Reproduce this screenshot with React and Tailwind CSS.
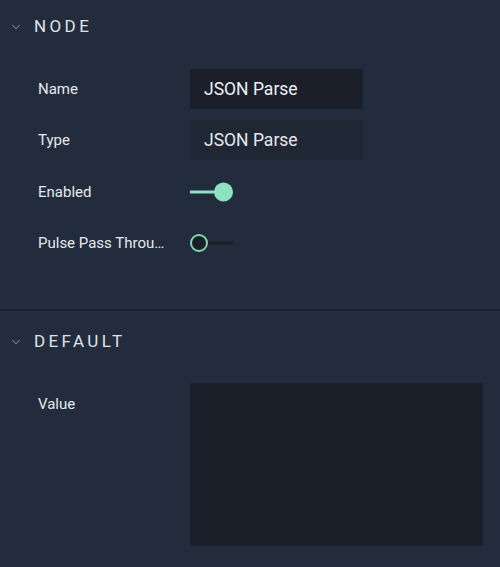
import { ChevronDown } from "lucide-react";

function SectionHeader({ title }) {
  return (
    <div className="flex h-[54px] items-center pl-[9px]">
      <ChevronDown className="h-[14px] w-[14px] text-[#7d8594]" strokeWidth={1.75} />
      <span className="ml-[11px] text-[17px] tracking-[0.2em] text-[#dfe3ea]">{title}</span>
    </div>
  );
}

function Row({ label, children, className = "h-[51.5px]" }) {
  return (
    <div className={`flex items-center ${className}`}>
      <div className="w-[190px] shrink-0 truncate pl-[38px] pr-[24px] text-[15px] text-[#e6e9ee]">{label}</div>
      {children}
    </div>
  );
}

function Toggle({ on }) {
  return (
    <div className="relative h-[20px] w-[43px]">
      <div
        className={`absolute top-1/2 h-[3px] -translate-y-1/2 ${on ? "left-0 right-[10px] bg-[#8fe2c1]" : "left-[10px] right-0 bg-[#1a1f28]"}`}
      />
      {on ? (
        <div className="absolute right-0 top-1/2 h-[19px] w-[19px] -translate-y-1/2 rounded-full bg-[#8fe2c1]" />
      ) : (
        <div className="absolute left-0 top-1/2 h-[18px] w-[18px] -translate-y-1/2 rounded-full border-[2.5px] border-[#7fd4b1] bg-[#1a1f28]" />
      )}
    </div>
  );
}

export default function App() {
  return (
    <div className="h-[567px] w-[500px] overflow-hidden bg-[#232c3c]" style={{ fontFamily: "Roboto, 'Liberation Sans', sans-serif" }}>
      <SectionHeader title="NODE" />
      <div className="pt-[9px]">
        <Row label="Name">
          <div className="flex h-[40px] w-[173px] items-center bg-[#1a1f29] px-[14px] text-[17.5px] text-[#eef0f4]">JSON Parse</div>
        </Row>
        <Row label="Type">
          <div className="flex h-[40px] w-[173px] items-center bg-[#1f2735] px-[14px] text-[17.5px] text-[#e6e9ee]">JSON Parse</div>
        </Row>
        <Row label="Enabled">
          <Toggle on />
        </Row>
        <Row label="Pulse Pass Through">
          <Toggle on={false} />
        </Row>
      </div>
      <div className="mt-[40px] h-[2px] bg-[#1b2230]" />
      <div className="pt-[4px]">
        <SectionHeader title="DEFAULT" />
      </div>
      <div className="flex pt-[14px]">
        <div className="w-[190px] shrink-0 pl-[38px] pt-[10px] text-[15px] text-[#e6e9ee]">Value</div>
        <div className="h-[163px] w-[293px] rounded-[3px] bg-[#1a1f29]" />
      </div>
    </div>
  );
}
